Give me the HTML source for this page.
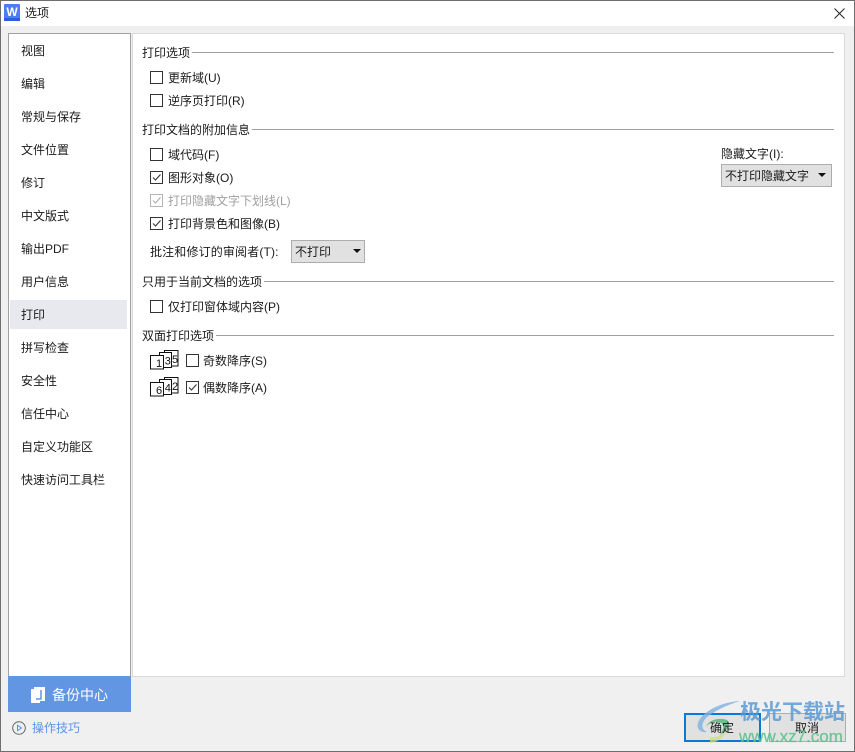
<!DOCTYPE html>
<html lang="zh"><head><meta charset="utf-8"><title>选项</title>
<style>
html,body{margin:0;padding:0;background:#f0f0f0}
#w{position:relative;width:855px;height:752px;overflow:hidden;background:#f0f0f0;font:12px/16px "Liberation Sans","Noto Sans CJK SC",sans-serif;color:#1a1a1a}
#w div,#w svg{position:absolute}
.t{white-space:nowrap}
.h{left:142px;white-space:nowrap;background:#fff;padding-right:2px;z-index:2}
.l{left:142px;width:692px;height:1px;background:#a0a0a0}
.c{left:150px;width:11px;height:11px;border:1px solid #333;background:#fff}
.n{left:21px;white-space:nowrap}
.d{background:#e1e1e1;border:1px solid #adadad;box-sizing:border-box}
.ar{width:0;height:0;border-left:4px solid transparent;border-right:4px solid transparent;border-top:4px solid #111}
</style></head><body><div id="w">
<div style="left:0;top:0;width:855px;height:26px;background:#fff"></div>
<div style="left:0;top:0;width:853px;height:750px;border:1px solid #6e6e6e;z-index:9;pointer-events:none"></div>
<div style="left:4px;top:4px;width:16px;height:17px;background:#4d7df0;border-radius:1px"></div>
<div style="left:4px;top:18px;width:16px;height:3px;background:#2f5fd8"></div>
<div class="t" style="left:4px;top:4px;width:16px;text-align:center;color:#fff;font-weight:bold;font-size:12px;line-height:16px">W</div>
<div class="t" style="left:25px;top:5px">选项</div>
<svg style="left:834px;top:8px" width="11" height="11"><path d="M.5.5l10 10M10.500.5l-10 10" stroke="#222" fill="none"/></svg>

<div style="left:8px;top:33px;width:121px;height:642px;background:#fff;border:1px solid #a0a0a0"></div>
<div style="left:132px;top:33px;width:711px;height:642px;background:#fff;border:1px solid #dadada"></div>
<div style="left:10px;top:300px;width:117px;height:29px;background:#e7e9ef"></div>
<div class="n" style="top:43px">视图</div>
<div class="n" style="top:76px">编辑</div>
<div class="n" style="top:109px">常规与保存</div>
<div class="n" style="top:142px">文件位置</div>
<div class="n" style="top:175px">修订</div>
<div class="n" style="top:208px">中文版式</div>
<div class="n" style="top:241px">输出PDF</div>
<div class="n" style="top:274px">用户信息</div>
<div class="n" style="top:307px">打印</div>
<div class="n" style="top:340px">拼写检查</div>
<div class="n" style="top:373px">安全性</div>
<div class="n" style="top:406px">信任中心</div>
<div class="n" style="top:439px">自定义功能区</div>
<div class="n" style="top:472px">快速访问工具栏</div>

<div style="left:8px;top:676px;width:123px;height:36px;background:#6295e2"></div>
<svg style="left:31px;top:687px" width="14" height="16"><path d="M0 2h3V0h11v14H9v2H0z" fill="#fff"/><path d="M5 12h5V3" stroke="#6295e2" stroke-width="1.500" fill="none"/></svg>
<div class="t" style="left:52px;top:687px;color:#fff;font-size:14px">备份中心</div>
<svg style="left:12px;top:721px" width="15" height="15"><circle cx="7" cy="7" r="6.300" fill="none" stroke="#666"/><path d="M5.500 4.300l4 2.700-4 2.700z" fill="none" stroke="#5b93e8"/></svg>
<div class="t" style="left:32px;top:720px;color:#5b93e8">操作技巧</div>

<div class="l" style="top:52px"></div><div class="h" style="top:45px">打印选项</div>
<div class="c" style="top:71px"></div><div class="t" style="left:168px;top:70px">更新域(U)</div>
<div class="c" style="top:94px"></div><div class="t" style="left:168px;top:93px">逆序页打印(R)</div>
<div class="l" style="top:129px"></div><div class="h" style="top:122px">打印文档的附加信息</div>
<div class="c" style="top:148px"></div><div class="t" style="left:168px;top:147px">域代码(F)</div>
<div class="c" style="top:171px"></div><svg style="left:150px;top:171px" width="13" height="13"><path d="M3 6.500l2.500 2.500 5-5.500" stroke="#333" fill="none" stroke-width="1.100"/></svg>
<div class="t" style="left:168px;top:170px">图形对象(O)</div>
<div class="c" style="top:194px;border-color:#b5b5b5"></div><svg style="left:150px;top:194px" width="13" height="13"><path d="M3 6.500l2.500 2.500 5-5.500" stroke="#aaa" fill="none" stroke-width="1.100"/></svg>
<div class="t" style="left:168px;top:193px;color:#a0a0a0">打印隐藏文字下划线(L)</div>
<div class="c" style="top:217px"></div><svg style="left:150px;top:217px" width="13" height="13"><path d="M3 6.500l2.500 2.500 5-5.500" stroke="#333" fill="none" stroke-width="1.100"/></svg>
<div class="t" style="left:168px;top:216px">打印背景色和图像(B)</div>
<div class="t" style="left:150px;top:244px;letter-spacing:.15px">批注和修订的审阅者(T):</div>
<div class="d" style="left:291px;top:240px;width:74px;height:23px"></div>
<div class="t" style="left:295px;top:244px">不打印</div>
<div class="ar" style="left:353px;top:249px"></div>
<div class="t" style="left:721px;top:146px">隐藏文字(I):</div>
<div class="d" style="left:721px;top:164px;width:111px;height:23px"></div>
<div class="t" style="left:725px;top:168px">不打印隐藏文字</div>
<div class="ar" style="left:818px;top:173px"></div>

<div class="l" style="top:281px"></div><div class="h" style="top:274px">只用于当前文档的选项</div>
<div class="c" style="top:300px"></div><div class="t" style="left:168px;top:299px">仅打印窗体域内容(P)</div>
<div class="l" style="top:335px"></div><div class="h" style="top:328px">双面打印选项</div>

<svg style="left:150px;top:350px" width="30" height="21">
<rect x="14.500" y=".5" width="13.500" height="15.500" fill="#fff" stroke="#111"/><rect x="9.500" y="2.500" width="12" height="15" fill="#fff" stroke="#111"/><rect x=".5" y="5.500" width="13" height="13.500" fill="#fff" stroke="#111"/>
<text x="6" y="17" fill="#111" font-family="Liberation Sans" font-size="11">1</text><text x="14.800" y="14.500" fill="#111" font-family="Liberation Sans" font-size="11">3</text><text x="22" y="13" fill="#111" font-family="Liberation Sans" font-size="11">5</text></svg>
<div class="c" style="left:186px;top:354px"></div><div class="t" style="left:203px;top:353px">奇数降序(S)</div>
<svg style="left:150px;top:377px" width="30" height="21">
<rect x="14.500" y=".5" width="13.500" height="15.500" fill="#fff" stroke="#111"/><rect x="9.500" y="2.500" width="12" height="15" fill="#fff" stroke="#111"/><rect x=".5" y="5.500" width="13" height="13.500" fill="#fff" stroke="#111"/>
<text x="6" y="17" fill="#111" font-family="Liberation Sans" font-size="11">6</text><text x="14.800" y="14.500" fill="#111" font-family="Liberation Sans" font-size="11">4</text><text x="22" y="13" fill="#111" font-family="Liberation Sans" font-size="11">2</text></svg>
<div class="c" style="left:186px;top:381px"></div><svg style="left:186px;top:381px" width="13" height="13"><path d="M3 6.500l2.500 2.500 5-5.500" stroke="#333" fill="none" stroke-width="1.100"/></svg>
<div class="t" style="left:203px;top:380px">偶数降序(A)</div>

<div class="d" style="left:684px;top:713px;width:77px;height:29px;border:2px solid #0a78d7"></div>
<div class="d" style="left:769px;top:713px;width:77px;height:29px"></div>
<svg style="left:694px;top:700px" width="46" height="44"><path d="M46 1C28 2 8 11 4 23c-2 6 3 10 9 9C7 29 7 24 12 18 20 11 33 5 46 1z" fill="#7fb2de" opacity=".8"/><path d="M12 27c2-7 13-10 21-7 5 4 0 11-7 15 3-5 5-9 1-12-6-3-12 0-15 4z" fill="#4fb578" opacity=".8"/><path d="M16 37c7 1 13-2 18-8-3 7-9 13-18 14z" fill="#cfdc7a" opacity=".75"/></svg>
<div class="t" style="left:710px;top:720px">确定</div>
<div class="t" style="left:795px;top:720px">取消</div>
<div class="t" style="left:740px;top:700px;font-size:21px;line-height:26px;font-weight:bold;color:#5b9bd5;opacity:.85">极光下载站</div>
<div class="t" style="left:739px;top:727px;font-size:17px;line-height:20px;color:#5cc08a;opacity:.85;-webkit-text-stroke:.3px #5cc08a">www.xz7.com</div>
</div></body></html>
